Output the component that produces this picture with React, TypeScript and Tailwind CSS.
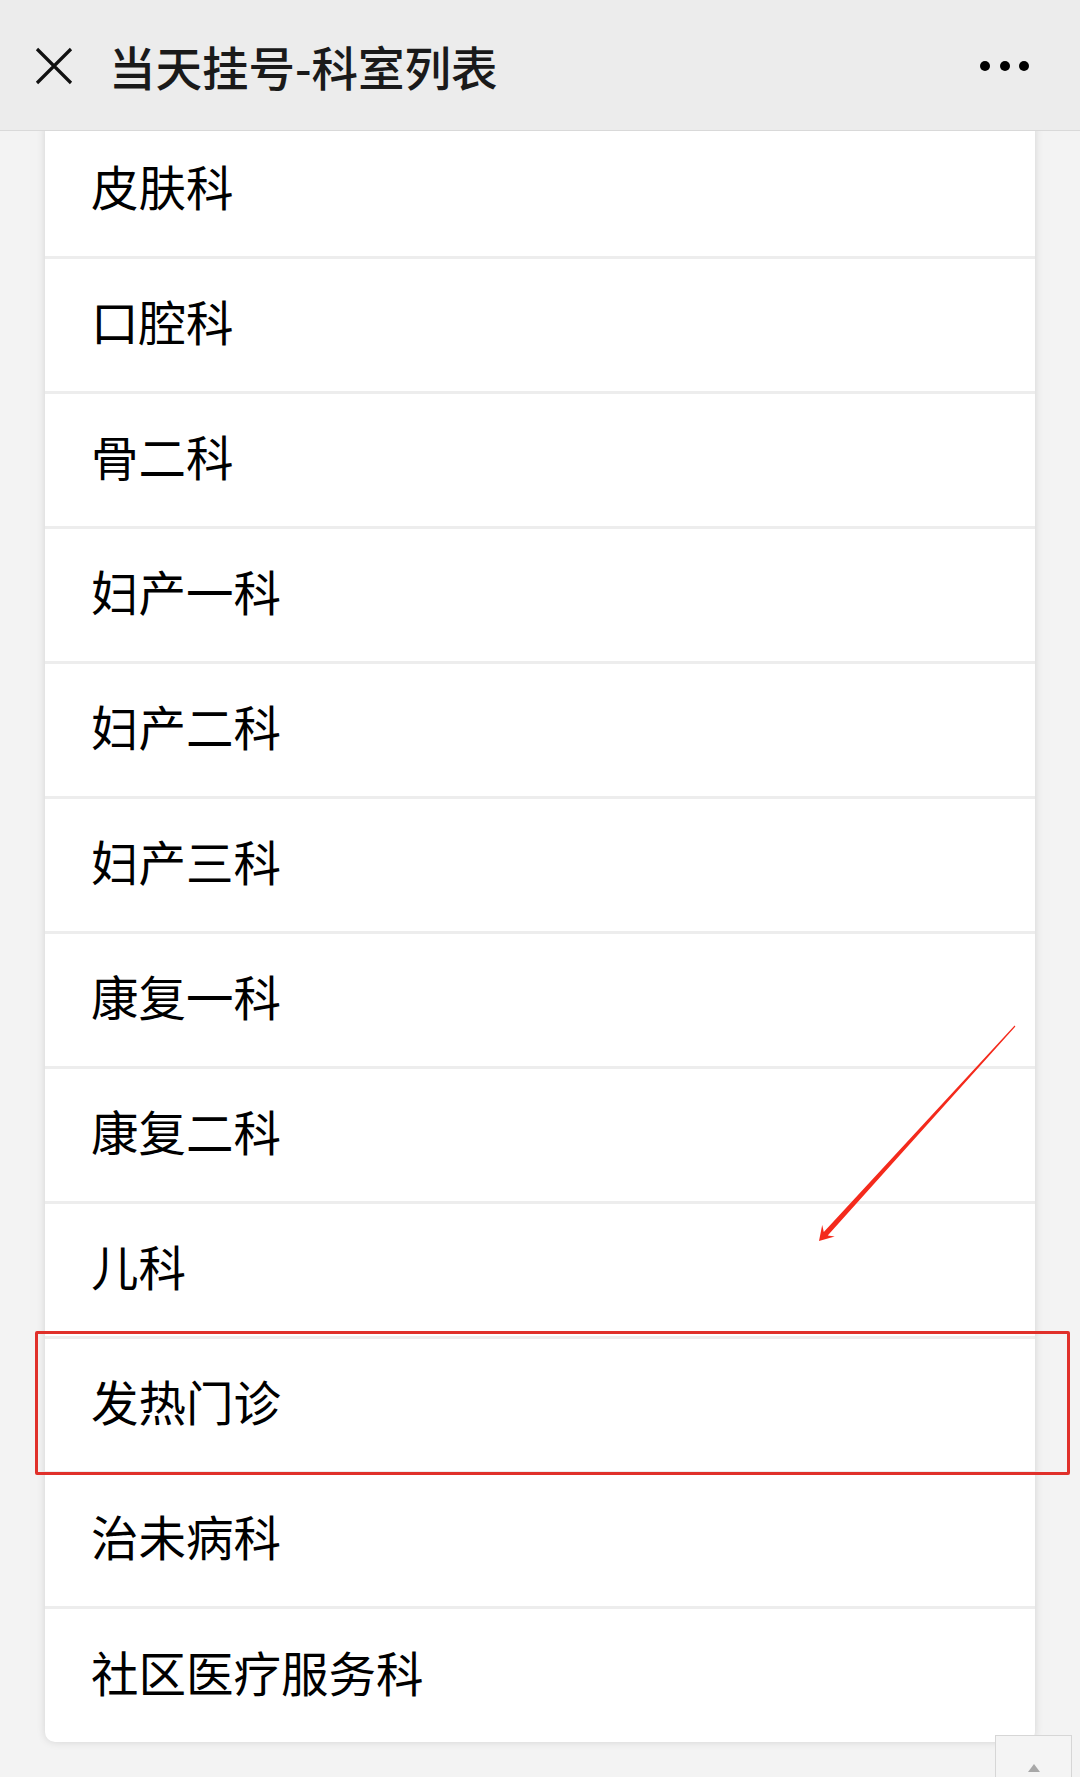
import React from "react";

const items = [
  "皮肤科",
  "口腔科",
  "骨二科",
  "妇产一科",
  "妇产二科",
  "妇产三科",
  "康复一科",
  "康复二科",
  "儿科",
  "发热门诊",
  "治未病科",
  "社区医疗服务科",
];

const cjk = { fontFamily: '"Noto Sans CJK SC", "Noto Sans", sans-serif' };

export default function App() {
  // arrow geometry
  const S = [1015, 1026];
  const T = [819, 1241];
  const len = Math.hypot(T[0] - S[0], T[1] - S[1]);
  const d = [(T[0] - S[0]) / len, (T[1] - S[1]) / len];
  const p = [-d[1], d[0]];
  const at = (base: number[], back: number, side: number) => [
    base[0] - d[0] * back + p[0] * side,
    base[1] - d[1] * back + p[1] * side,
  ];
  const pts = [
    at(S, 0, 0.6),
    at(T, 10, 2.6),
    at(T, 14, 8.5),
    T,
    at(T, 14, -8.5),
    at(T, 10, -2.6),
    at(S, 0, -0.6),
  ]
    .map((q) => `${q[0].toFixed(1)},${q[1].toFixed(1)}`)
    .join(" ");

  return (
    <div className="relative min-h-[1777px] w-[1080px] overflow-hidden bg-[#f3f3f3]" style={cjk}>
      <header className="relative z-10 flex h-[131px] items-center border-b border-[#d9d9d9] bg-[#ececec] pl-[35px] pr-[51px] pt-[2px]">
        <svg width="38" height="38" viewBox="0 0 38 38" className="shrink-0">
          <path d="M2 2 L36 36 M36 2 L2 36" stroke="#111" strokeWidth="3.2" fill="none" />
        </svg>
        <div className="ml-[36px] text-[46.5px] font-medium leading-none text-[#1a1a1a]">当天挂号-科室列表</div>
        <div className="ml-auto flex items-center gap-[9.5px]">
          <span className="block h-[10px] w-[10px] rounded-full bg-black" />
          <span className="block h-[10px] w-[10px] rounded-full bg-black" />
          <span className="block h-[10px] w-[10px] rounded-full bg-black" />
        </div>
      </header>

      <main className="-mt-[7px] px-[45px]">
        <div className="overflow-hidden rounded-b-[10px] bg-white shadow-[0_0_8px_rgba(0,0,0,0.13)]">
          {items.map((t, i) => (
            <div
              key={t}
              className={
                i === items.length - 1
                  ? "flex h-[133px] items-center pb-[8px] pl-[46px] text-[47.5px] leading-none text-black"
                  : "flex h-[135px] items-center border-b-[3px] border-[#ededed] pb-[8px] pl-[46px] text-[47.5px] leading-none text-black"
              }
            >
              {t}
            </div>
          ))}
        </div>
      </main>

      {/* red highlight box */}
      <div className="absolute left-[35px] top-[1331px] h-[144px] w-[1035px] rounded-[2px] border-[3px] border-[#e0302a]" />

      {/* red arrow */}
      <svg className="pointer-events-none absolute left-0 top-0" width="1080" height="1777" viewBox="0 0 1080 1777">
        <polygon points={pts} fill="#f42a1c" />
      </svg>

      {/* scroll to top */}
      <div className="absolute left-[995px] top-[1735px] flex h-[60px] w-[77px] justify-center border border-[#d6d6d6] bg-[#f4f4f4] pt-[28px]">
        <svg width="12" height="8" viewBox="0 0 12 8">
          <polygon points="6,0 12,8 0,8" fill="#a8a8a8" />
        </svg>
      </div>
    </div>
  );
}
